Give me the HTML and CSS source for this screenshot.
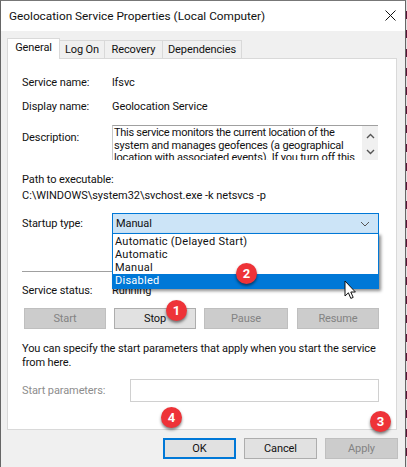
FILE: index.html
```html
<!DOCTYPE html>
<html lang="en">
<head>
<meta charset="utf-8">
<title>Geolocation Service Properties</title>
<link rel="stylesheet" href="styles.css">
</head>
<body>
<div class="window">
  <header class="titlebar">
    <span class="title">Geolocation Service Properties (Local Computer)</span>
    <svg class="close" width="11" height="11" viewBox="0 0 11 11"><path d="M.5.5l10 10M10.5.5l-10 10" stroke="#111" stroke-width="1" fill="none"/></svg>
  </header>
  <main class="client">
    <nav class="tabs">
      <span class="tab active">General</span>
      <span class="tab t-logon">Log On</span>
      <span class="tab t-recovery">Recovery</span>
      <span class="tab t-deps">Dependencies</span>
    </nav>
    <section class="panel">
      <div class="row r-name"><span class="label">Service name:</span><span>lfsvc</span></div>
      <div class="row r-display"><span class="label">Display name:</span><span>Geolocation Service</span></div>
      <div class="row r-desc">
        <span class="label">Description:</span>
        <div class="descbox">
          <div class="desctext"><span class="first-line">This service monitors the current location of the</span><br>system and manages geofences (a geographical<br>location with associated events).  If you turn off this</div>
          <div class="scroll">
            <svg width="9" height="6" viewBox="0 0 9 6"><path d="M1 5l3.5-3.5L8 5" stroke="#555" stroke-width="1.4" fill="none"/></svg>
            <svg width="9" height="6" viewBox="0 0 9 6"><path d="M1 1l3.500 3.500L8 1" stroke="#555" stroke-width="1.4" fill="none"/></svg>
          </div>
        </div>
      </div>
      <div class="path-label">Path to executable:</div>
      <div class="path">C:\WINDOWS\system32\svchost.exe -k netsvcs -p</div>
      <div class="row r-startup">
        <span class="label">Startup type:</span>
        <div class="combo">
          <span>Manual</span>
          <svg width="10" height="6" viewBox="0 0 10 6"><path d="M1 1l4 4 4-4" stroke="#555" stroke-width="1" fill="none"/></svg>
          <ul class="dropdown">
            <li>Automatic (Delayed Start)</li>
            <li>Automatic</li>
            <li>Manual</li>
            <li class="selected">Disabled</li>
          </ul>
        </div>
      </div>
      <hr class="sep">
      <div class="row r-status"><span class="label">Service status:</span><span>Running</span></div>
      <div class="svc-buttons">
        <span class="btn off b1">Start</span>
        <span class="btn b2">Stop</span>
        <span class="btn off b3">Pause</span>
        <span class="btn off b4">Resume</span>
      </div>
      <p class="hint">You can specify the start parameters that apply when you start the service<br>from here.</p>
      <div class="row r-params"><span class="label off-text">Start parameters:</span><div class="param-input"></div></div>
    </section>
    <footer class="actions">
      <span class="btn ok">OK</span>
      <span class="btn cancel">Cancel</span>
      <span class="btn off apply">Apply</span>
    </footer>
  </main>
  <span class="badge n1">1</span>
  <span class="badge n2">2</span>
  <span class="badge n3">3</span>
  <span class="badge n4">4</span>
  <svg class="cursor" width="13" height="20" viewBox="0 0 13 20"><path d="M1 1v15l3.400-3.200 2.400 5.600 2.400-1-2.400-5.400h4.600z" fill="#fff" stroke="#111" stroke-width="1"/></svg>
</div>
</body>
</html>
```
FILE: styles.css
```css
* { box-sizing: border-box; }
html, body { margin: 0; padding: 0; }
body {
  width: 407px; height: 467px; overflow: hidden;
  background: repeating-linear-gradient(#e4e0e2 0 11px, #5a1236 11px 19px);
  font: 11px/16px Roboto, sans-serif;
  letter-spacing: -.1px;
  color: #111;
}
.window {
  position: relative;
  width: 406px; height: 467px;
  background: #f0f0f0;
  border-top: 1px solid #777;
  border-left: 1px solid #666;
  border-right: 1px solid #666;
}
.titlebar {
  height: 30px; background: #fff;
  display: flex; align-items: center; justify-content: space-between;
  padding: 0 8px 0 8px;
}
.title { font-size: 11.8px; letter-spacing: 0; }
.close { margin-top: -1px; margin-right: 1px; }
.client { padding: 7px 8px 0 6px; }
.tabs { display: flex; align-items: flex-end; height: 20px; position: relative; z-index: 1; }
.tab {
  height: 18px; padding-top: 1px; text-align: center;
  background: #f0f0f0;
  border: 1px solid #d9d9d9; border-bottom: 0; border-left: 0;
}
.tab.active {
  height: 21px; width: 53px; margin-bottom: -1px;
  background: #fff; border-left: 1px solid #d9d9d9;
}
.t-logon { width: 45px; }
.t-recovery { width: 58px; }
.t-deps { width: 79px; }
.panel {
  width: 390px; height: 372px;
  background: #fff; border: 1px solid #d9d9d9;
  padding: 16px 17px 0 14px;
}
.row { display: flex; align-items: flex-start; }
.label { width: 90px; flex: none; }
.r-name { height: 16px; }
.r-display { height: 16px; margin-top: 8px; }
.r-desc { margin-top: 10px; }
.r-desc .label { margin-top: 5px; }
.descbox {
  width: 266px; height: 35px; overflow: hidden;
  display: flex; justify-content: space-between;
  border-top: 1px solid #a0a0a0; border-left: 1px solid #c8c8c8;
}
.desctext { line-height: 12.6px; padding: 1px 0 0 1px; letter-spacing: -.17px; white-space: nowrap; overflow: hidden; }
.first-line { letter-spacing: -.27px; }
.scroll {
  width: 16px; flex: none; background: #f0f0f0;
  display: flex; flex-direction: column; align-items: center;
  gap: 10px; padding-top: 7px;
}
.path-label { margin-top: 12px; }
.path { letter-spacing: -.03px; }
.r-startup { margin-top: 9px; }
.r-startup .label { margin-top: 3px; }
.combo {
  position: relative; width: 267px; height: 21px;
  background: #cce4f7; border: 1px solid #0078d7;
  display: flex; align-items: center; justify-content: space-between;
  padding: 0 8px 0 3px;
}
.dropdown {
  position: absolute; left: -1px; top: 19px; width: 267px; height: 56px;
  margin: 0; padding: 1px 0 0; list-style: none;
  background: #fff; border: 1px solid #0078d7;
  box-shadow: 2px 2px 3px rgba(0,0,0,.45);
  letter-spacing: .25px;
  z-index: 2;
}
.dropdown li { height: 13px; line-height: 13px; padding-left: 2px; white-space: nowrap; }
.dropdown li.selected { background: #0078d7; color: #fff; height: 14px; }
.sep { margin: 37px 0 0; height: 1px; width: 357px; border: 0; background: #a0a0a0; }
.r-status { margin-top: 11px; }
.svc-buttons { display: flex; margin: 9px 0 0 2px; height: 21px; }
.btn {
  display: flex; align-items: center; justify-content: center;
  height: 21px; background: #e1e1e1; border: 1px solid #adadad;
}
.btn.off { background: #cccccc; border-color: #bfbfbf; color: #838383; }
.b1 { width: 82px; }
.b2 { width: 82px; margin-left: 8px; }
.b3 { width: 84px; margin-left: 8px; }
.b4 { width: 82px; margin-left: 9px; }
.hint { margin: 13px 0 0; line-height: 14px; white-space: nowrap; }
.r-params { margin-top: 9px; align-items: center; }
.r-params .label { width: 108px; }
.off-text { color: #8d8d8d; }
.param-input { width: 249px; height: 23px; border: 1px solid #d0d0d0; background: #fff; }
.actions { display: flex; justify-content: flex-end; gap: 8px; margin-top: 8px; width: 391px; }
.actions .btn { width: 73px; }
.ok { border: 2px solid #0078d7; }
.badge {
  position: absolute; width: 21px; height: 21px; border-radius: 50%;
  background: #ee3338; color: #fff; font-weight: 700; font-size: 13px;
  display: flex; align-items: center; justify-content: center;
  box-shadow: 0 2px 3px rgba(0,0,0,.5);
  z-index: 3;
}
.n1 { left: 165px; top: 299px; }
.n2 { left: 235px; top: 262px; }
.n3 { left: 369px; top: 410px; }
.n4 { left: 160px; top: 406px; }
.cursor { position: absolute; left: 343px; top: 279px; z-index: 3; }
```
